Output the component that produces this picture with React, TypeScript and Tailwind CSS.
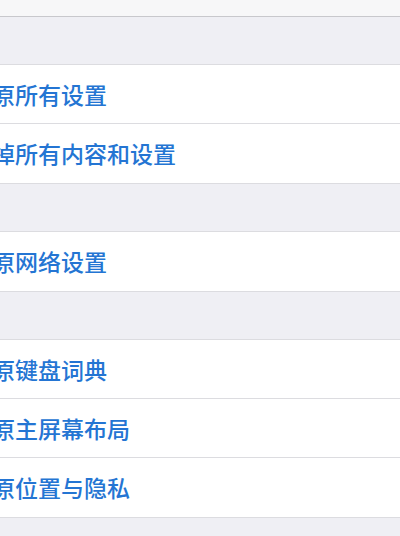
const groups: string[][] = [
  ['还原所有设置', '抹掉所有内容和设置'],
  ['还原网络设置'],
  ['还原键盘词典', '还原主屏幕布局', '还原位置与隐私'],
];

function Row({ label, last }: { label: string; last: boolean }) {
  return (
    <div className="h-[59px] bg-white flex items-center relative">
      <span className="text-[23px] leading-none font-medium text-[#2475d3] whitespace-nowrap -ml-[31px]">{label}</span>
      {!last && <div className="absolute bottom-0 left-0 right-0 h-px bg-[#dcdce0]" />}
    </div>
  );
}

export default function App() {
  return (
    <div
      className="w-[400px] h-[536px] overflow-hidden bg-[#efeff4]"
      style={{ fontFamily: '"Noto Sans CJK SC", "Noto Sans", sans-serif' }}
    >
      <div className="h-[17px] bg-[#f7f7f8] border-b border-[#c8c8cc]" />
      {groups.map((items, gi) => (
        <div key={gi} className="pt-[47px]">
          <div className="border-y border-[#dcdce0]">
            {items.map((label, i) => (
              <Row key={label} label={label} last={i === items.length - 1} />
            ))}
          </div>
        </div>
      ))}
    </div>
  );
}
